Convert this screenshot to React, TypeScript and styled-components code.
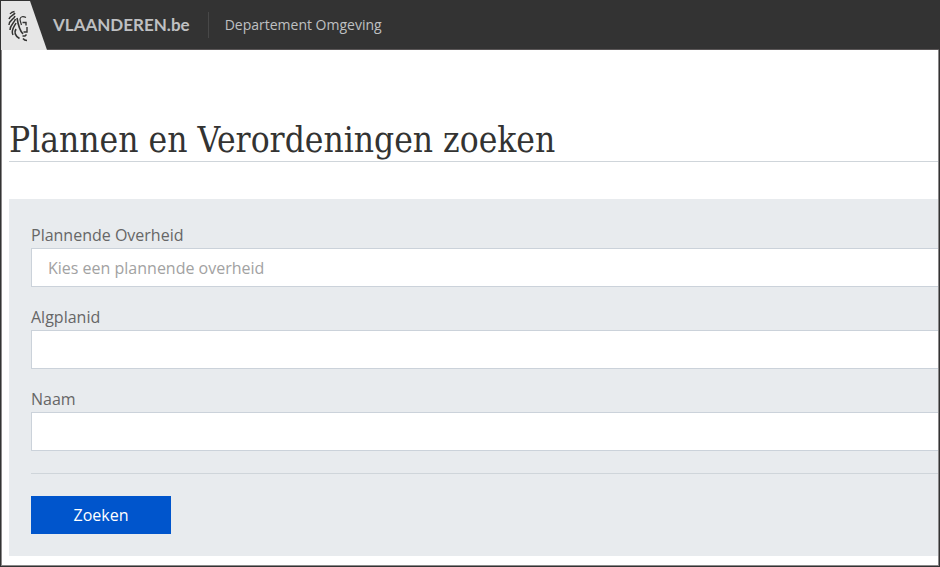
import React from "react";
import styled, { createGlobalStyle } from "styled-components";

const GlobalStyle = createGlobalStyle`
  *, *::before, *::after { box-sizing: border-box; }
  body {
    margin: 0;
    background: #fff;
    font-family: "Open Sans", "Noto Sans", sans-serif;
    color: #666;
  }
`;

const Frame = styled.div`
  min-height: 100vh;
  display: flex;
  flex-direction: column;
  border: 1px solid #333;
  overflow: hidden;
`;

const Header = styled.header`
  display: flex;
  align-items: center;
  height: 49px;
  background: #333333;
  border-bottom: 1px solid #5a5657;
`;

const HomeLink = styled.a`
  display: flex;
  align-items: center;
  gap: 6px;
  color: #bfc0c2;
  font-family: Lato, sans-serif;
  font-size: 17px;
  font-weight: 700;
  line-height: 26px;
  text-decoration: none;
`;

const Emblem = styled.svg`
  display: block;
  width: 46px;
  height: 49px;
`;

const Department = styled.a`
  margin-left: 18px;
  padding-left: 16px;
  border-left: 1px solid #484848;
  color: #bfc0c2;
  font-size: 14px;
  line-height: 26px;
  text-decoration: none;
`;

const Main = styled.main`
  flex: 1;
  padding: 69px 0 8px 7px;
  border: solid #8a8889;
  border-width: 0 1px 1px;
`;

const Title = styled.h1`
  margin: 0 0 37px;
  border-bottom: 1px solid #cfd5da;
  color: #333332;
  font-family: "DejaVu Serif Condensed", "DejaVu Serif", serif;
  font-stretch: condensed;
  font-size: 35px;
  font-weight: 400;
  line-height: 42px;
`;

const SearchForm = styled.form`
  padding: 22px 0 22px 22px;
  background: #e8ebee;
`;

const Fields = styled.div`
  display: grid;
  gap: 16px;
  padding-bottom: 22px;
  border-bottom: 1px solid #cfd5da;
`;

const Field = styled.div`
  display: flex;
  flex-direction: column;
`;

const Label = styled.label`
  padding-top: 1px;
  font-size: 16px;
  line-height: 26px;
`;

const controlStyle = `
  width: 100%;
  height: 39px;
  margin: 0;
  padding: 0 16px;
  border: 1px solid #cbd2da;
  border-right: 0;
  border-radius: 0;
  background: #fff;
  font: inherit;
  font-size: 16px;
`;

const Select = styled.select`
  ${controlStyle}
  appearance: none;
  color: #a2a2a2;
`;

const TextInput = styled.input`
  ${controlStyle}
  color: #333332;
`;

const SubmitButton = styled.button`
  display: block;
  width: 140px;
  height: 38px;
  margin-top: 22px;
  padding: 0;
  border: 0;
  background: #0055cc;
  color: #fff;
  font: inherit;
  font-size: 16px;
`;

const Lion = () => (
  <Emblem viewBox="0 0 46 49" aria-hidden="true">
    <path d="M0 0H29L46 49H0Z" fill="#e6e6e6" />
    <g fill="none" stroke="#333332">
      <path d="M9 13C10 11.500 11 11 13.500 10.500" strokeWidth="1.300" />
      <path d="M8 18C9 14.500 12.500 14.500 14 12" strokeWidth="1.500" />
      <path d="M8 24C8 19 13 18.500 14 15" strokeWidth="1.500" />
      <path d="M9 29C9 24 13 22.500 14.500 18" strokeWidth="1.500" />
      <path d="M12 34C9.500 29 13 26 15 22" strokeWidth="1.500" />
      <path d="M18.500 37.500C14 35 13 31 15 28" strokeWidth="1.700" />
      <path d="M16 17C17 23 18 29 22 33" strokeWidth="1.600" />
      <path d="M25 16.500C22 15 19.500 15.500 19 18C19 20 20 22 20.500 24" strokeWidth="1.200" />
      <path d="M21.500 21.500H25V24.500M26 26V31H22.500" strokeWidth="1.400" />
      <path d="M25.500 33.500L24 35H21.500M22 37.500C23 39 24 39.500 26 39.500" strokeWidth="1.500" />
    </g>
  </Emblem>
);

export default function App() {
  return (
    <>
      <GlobalStyle />
      <Frame>
        <Header>
          <HomeLink href="#">
            <Lion />
            <span>VLAANDEREN.be</span>
          </HomeLink>
          <Department href="#">Departement Omgeving</Department>
        </Header>
        <Main>
          <Title>Plannen en Verordeningen zoeken</Title>
          <SearchForm onSubmit={(event) => event.preventDefault()}>
            <Fields>
              <Field>
                <Label htmlFor="overheid">Plannende Overheid</Label>
                <Select id="overheid" defaultValue="">
                  <option value="">Kies een plannende overheid</option>
                </Select>
              </Field>
              <Field>
                <Label htmlFor="algplanid">Algplanid</Label>
                <TextInput id="algplanid" type="text" />
              </Field>
              <Field>
                <Label htmlFor="naam">Naam</Label>
                <TextInput id="naam" type="text" />
              </Field>
            </Fields>
            <SubmitButton type="submit">Zoeken</SubmitButton>
          </SearchForm>
        </Main>
      </Frame>
    </>
  );
}
